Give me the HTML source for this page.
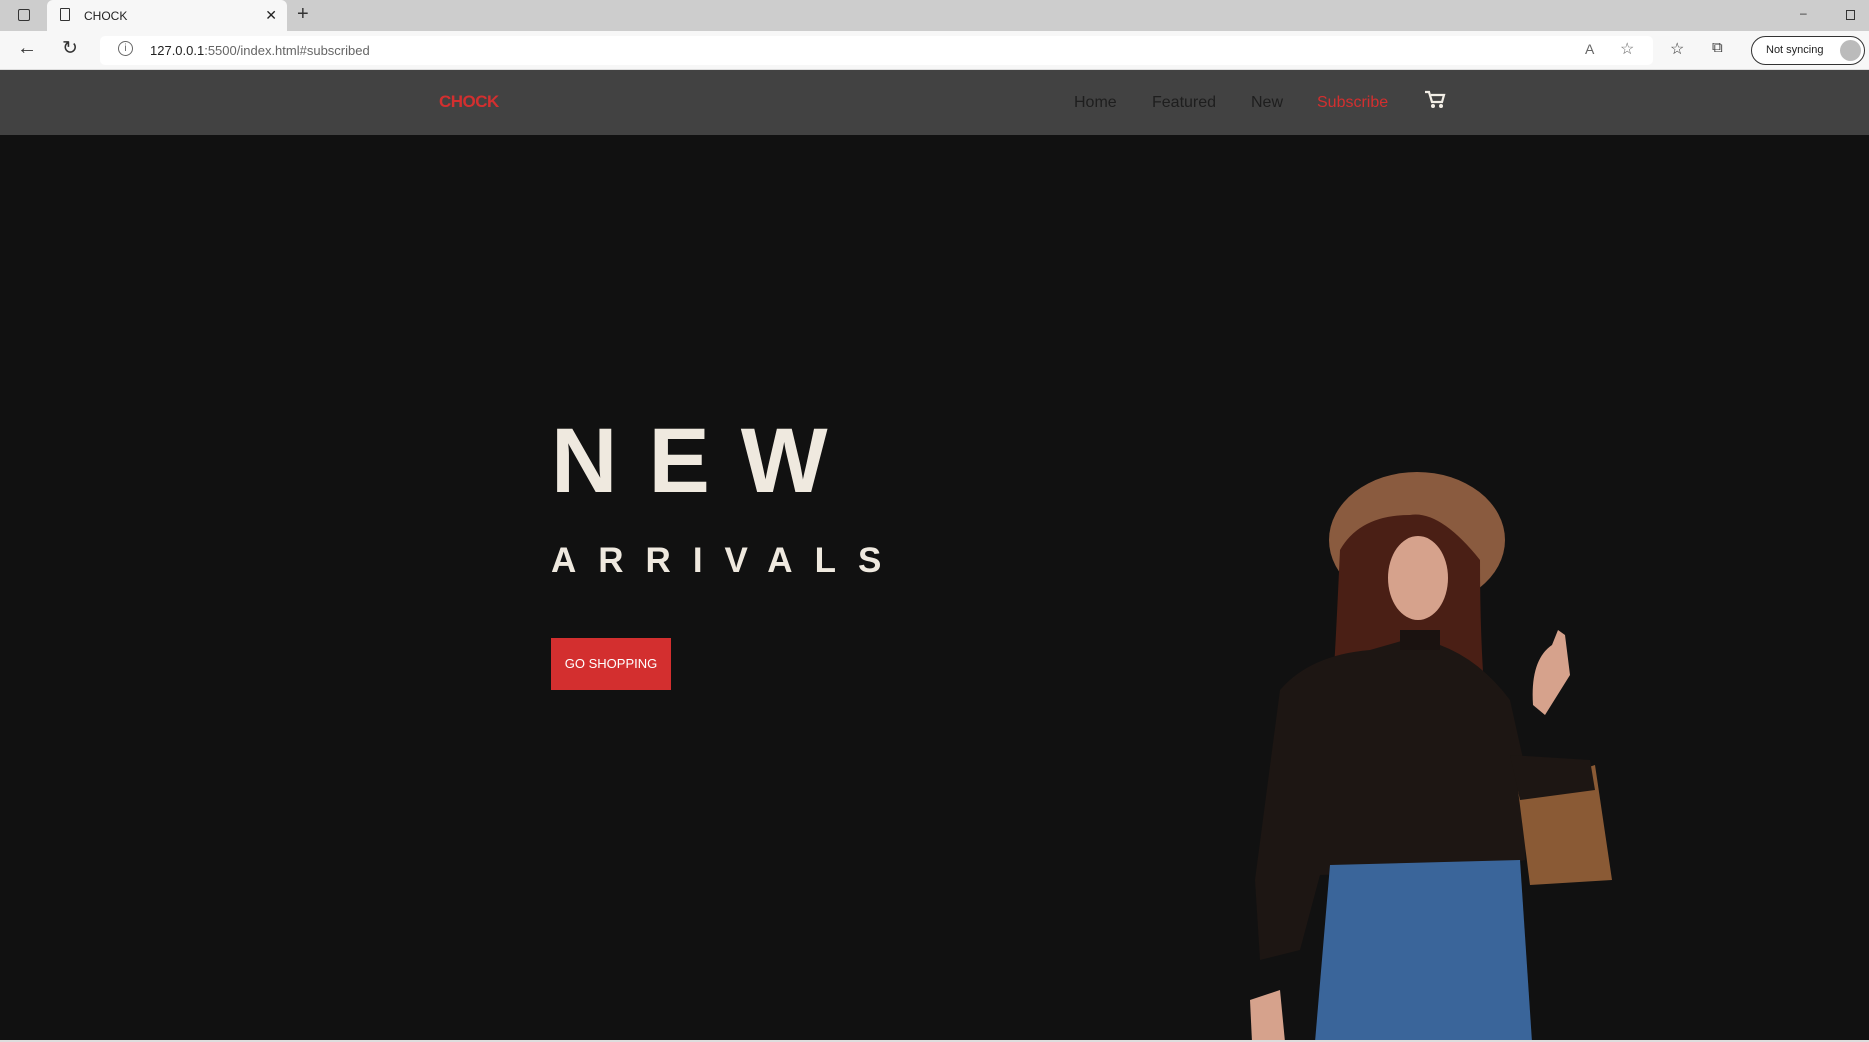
<!DOCTYPE html>
<html><head><meta charset="utf-8"><style>
*{margin:0;padding:0;box-sizing:border-box}
body{width:1869px;height:1042px;overflow:hidden;background:#111;font-family:"Liberation Sans",sans-serif;position:relative}
.tabs{position:absolute;left:0;top:0;width:1869px;height:31px;background:#cdcdcd}
.tab{position:absolute;left:47px;top:0;width:240px;height:31px;background:#f7f7f7;border-radius:6px 6px 0 0;font-size:12px;color:#222;padding:9px 0 0 37px}
.addr{position:absolute;left:0;top:31px;width:1869px;height:39px;background:#f7f7f7;border-bottom:1px solid #ddd}
.url{position:absolute;left:100px;top:36px;width:1553px;height:29px;background:#fff;border-radius:5px;font-size:13px;color:#222;padding:7px 0 0 50px}
.url span{color:#666}
.sync{position:absolute;left:1751px;top:36px;width:114px;height:29px;border:1px solid #333;border-radius:15px;font-size:11px;padding:7px 0 0 14px;color:#222;background:#fff}
.nav{position:absolute;left:0;top:70px;width:1869px;height:65px;background:#424242}
.logo{position:absolute;left:439px;top:92px;font-size:17px;font-weight:bold;color:#d32f2f;letter-spacing:-0.5px}
.lk{position:absolute;top:94px;font-size:16px;color:#1e1e1e;text-decoration:none}
h1{position:absolute;left:551px;top:415px;font-size:92px;font-weight:bold;color:#efe9df;letter-spacing:31px;line-height:1}
h2{position:absolute;left:551px;top:543px;font-size:35px;font-weight:bold;color:#efe9df;letter-spacing:22px;line-height:1}
.btn{position:absolute;left:551px;top:638px;width:120px;height:52px;background:#d32f2f;color:#fff;font-size:13px;text-align:center;line-height:52px}
.bot{position:absolute;left:0;top:1040px;width:1869px;height:2px;background:#ddd}
</style></head><body>
<div class="tabs"><div class="tab">CHOCK<span style="position:absolute;right:10px;top:7px;font-size:14px">✕</span></div>
<div style="position:absolute;left:18px;top:9px;width:12px;height:12px;border:1.5px solid #333;border-radius:2px"></div>
<div style="position:absolute;left:60px;top:8px;width:10px;height:13px;border:1.5px solid #333;border-radius:1px"></div>
<div style="position:absolute;left:297px;top:3px;font-size:20px;color:#333">+</div>
<div style="position:absolute;left:1800px;top:6px;font-size:12px;color:#333">–</div>
<div style="position:absolute;left:1846px;top:10px;width:9px;height:10px;border:1.2px solid #333"></div>
</div>
<div class="addr">
<div style="position:absolute;left:17px;top:6px;font-size:20px;color:#333">←</div>
<div style="position:absolute;left:62px;top:6px;font-size:19px;color:#333">↻</div>
<div style="position:absolute;left:1670px;top:8px;font-size:16px;color:#333">☆</div>
<div style="position:absolute;left:1712px;top:8px;font-size:15px;color:#333">⧉</div>
</div>
<div class="url"><span style="position:absolute;left:18px;top:5px;width:15px;height:15px;border:1px solid #666;border-radius:50%;font-size:10px;text-align:center;line-height:13px">i</span>127.0.0.1<span>:5500/index.html#subscribed</span>
<span style="position:absolute;left:1485px;top:5px;font-size:14px">A</span><span style="position:absolute;left:1520px;top:3px;font-size:16px">☆</span></div>
<div class="sync">Not syncing<span style="position:absolute;right:3px;top:3px;width:21px;height:21px;border-radius:50%;background:#bbb"></span></div>
<div class="nav"></div>
<div class="logo">CHOCK</div>
<a class="lk" style="left:1074px">Home</a>
<a class="lk" style="left:1152px">Featured</a>
<a class="lk" style="left:1251px">New</a>
<a class="lk" style="left:1317px;color:#d32f2f">Subscribe</a>
<svg style="position:absolute;left:1424px;top:90px" width="22" height="20" viewBox="0 0 22 20"><path d="M1 2h4l3 10h10l2-7H7" fill="none" stroke="#f2eee6" stroke-width="2.2"/><circle cx="9" cy="16" r="2" fill="#f2eee6"/><circle cx="17" cy="16" r="2" fill="#f2eee6"/></svg>
<h1>NEW</h1>
<h2>ARRIVALS</h2>
<div class="btn">GO SHOPPING</div>
<svg style="position:absolute;left:1240px;top:460px" width="400" height="582" viewBox="0 0 400 582" preserveAspectRatio="none">
<ellipse cx="177" cy="80" rx="88" ry="68" fill="#8a5b3f"/>
<path d="M100 90 Q95 200 92 240 L245 240 Q240 180 240 100 Q200 50 170 55 Q120 55 100 90Z" fill="#4a1f15"/>
<path d="M40 230 Q70 195 130 190 L165 180 L200 185 Q240 200 270 240 L290 330 L285 400 L240 410 L80 415 L60 490 L20 500 L15 420 Z" fill="#1d1613"/>
<path d="M90 405 L280 400 L292 582 L75 582 Z" fill="#3a659a"/>
<ellipse cx="178" cy="118" rx="30" ry="42" fill="#d6a28c"/>
<path d="M160 170 L200 170 L200 190 L160 190Z" fill="#1a1210"/>
<path d="M293 245 Q290 200 312 185 L318 170 L325 175 L330 215 L305 255Z" fill="#d6a28c"/>
<path d="M278 330 L355 305 L372 420 L290 425 Z" fill="#8a5a35"/>
<path d="M270 295 L350 300 L355 330 L280 340Z" fill="#1d1613"/>
<path d="M10 540 L40 530 L45 582 L12 582Z" fill="#d6a28c"/>
</svg>
<div class="bot"></div>
</body></html>
